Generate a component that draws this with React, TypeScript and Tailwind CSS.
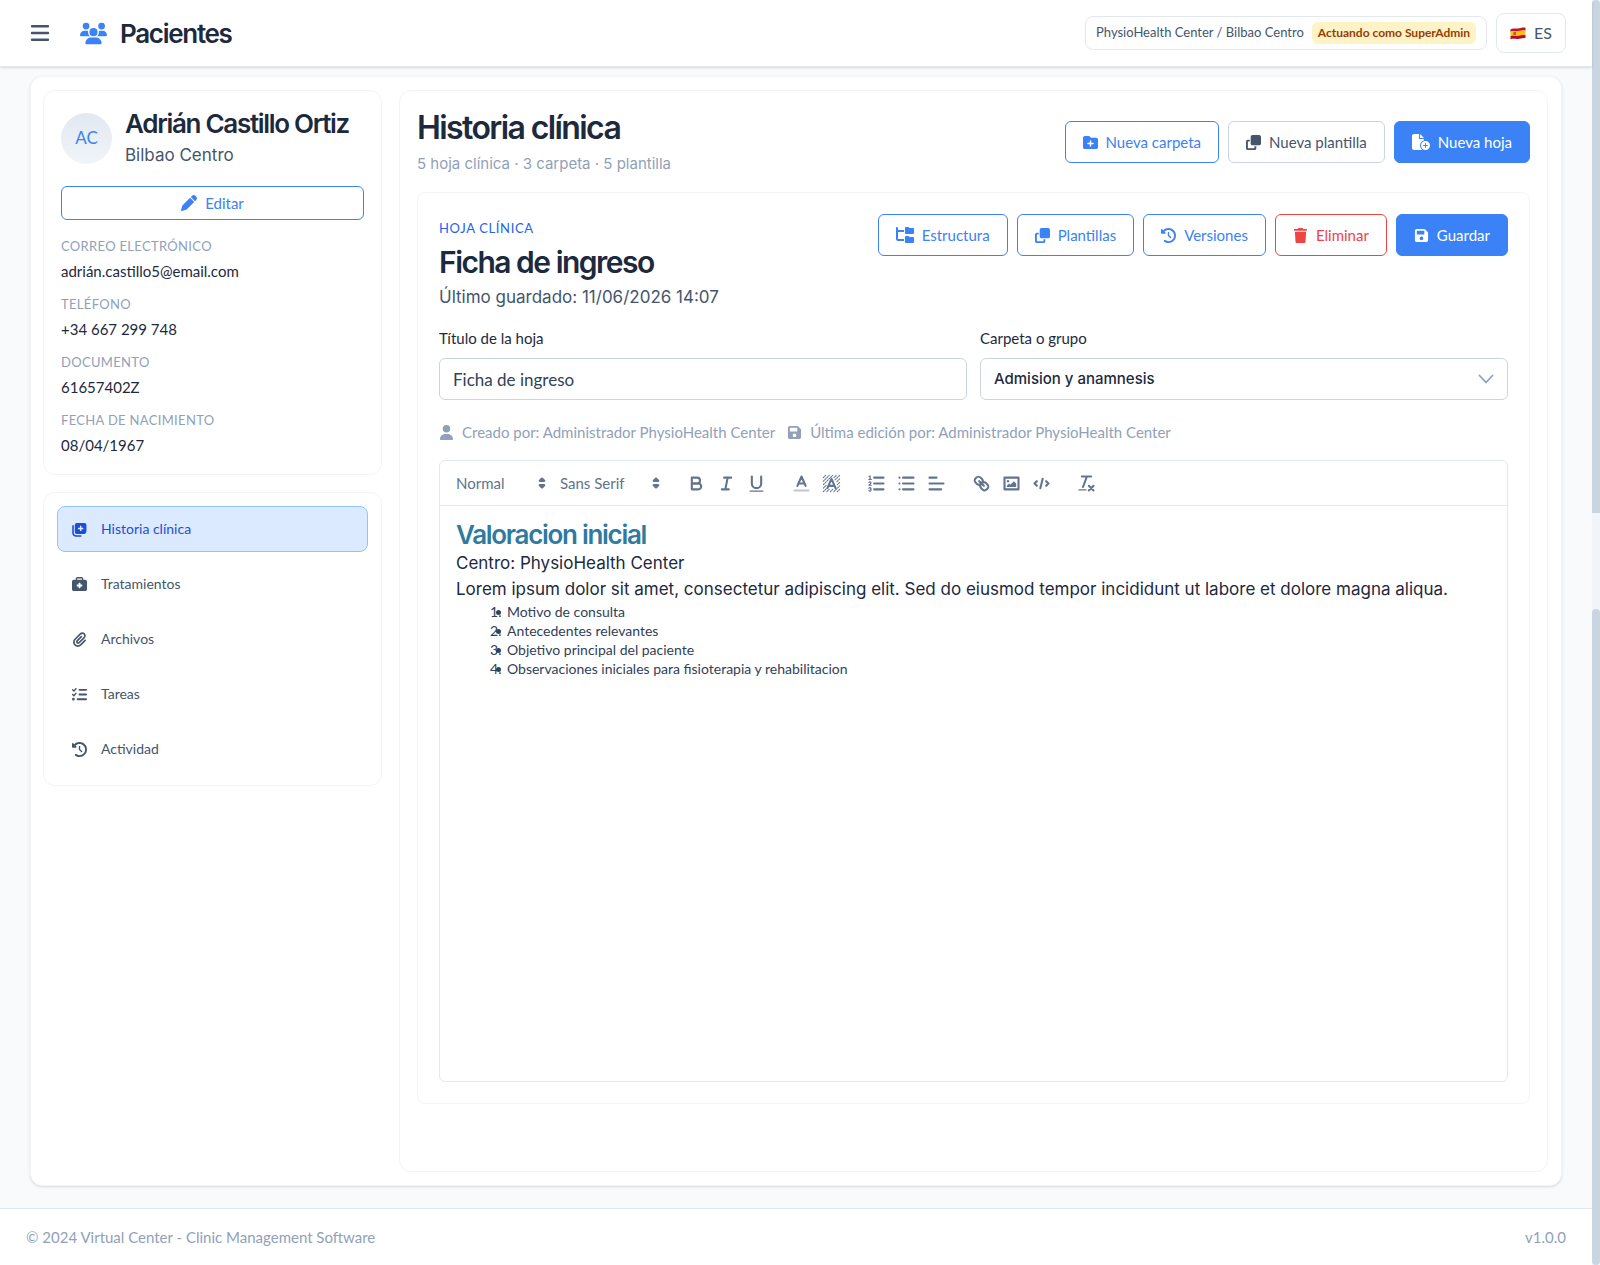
import { useState, type ReactNode } from 'react';
import {
  FaUsers,
  FaPen,
  FaBriefcaseMedical,
  FaPaperclip,
  FaListCheck,
  FaClockRotateLeft,
  FaFolderPlus,
  FaClone,
  FaFileCirclePlus,
  FaFolderTree,
  FaTrash,
  FaFloppyDisk,
  FaUser,
} from 'react-icons/fa6';
import clsx from 'clsx';

type Variant = 'outline' | 'neutral' | 'danger' | 'solid';

const variants: Record<Variant, string> = {
  outline: 'border-[#3b82f6] text-[#3b82f6] bg-white',
  neutral: 'border-slate-300 text-slate-600 bg-white',
  danger: 'border-[#ef4444] text-[#ef4444] bg-white',
  solid: 'border-[#3b82f6] bg-[#3b82f6] text-white',
};

const patientFields = [
  { label: 'Correo electrónico', value: 'adrián.castillo5@email.com' },
  { label: 'Teléfono', value: '+34 667 299 748' },
  { label: 'Documento', value: '61657402Z' },
  { label: 'Fecha de nacimiento', value: '08/04/1967' },
];

const sections = [
  { id: 'historia', label: 'Historia clínica', icon: <RecordsIcon /> },
  { id: 'tratamientos', label: 'Tratamientos', icon: <FaBriefcaseMedical className="text-[15px]" /> },
  { id: 'archivos', label: 'Archivos', icon: <FaPaperclip className="text-[15px]" /> },
  { id: 'tareas', label: 'Tareas', icon: <FaListCheck className="text-[15px]" /> },
  { id: 'actividad', label: 'Actividad', icon: <FaClockRotateLeft className="text-[15px]" /> },
];

const listItems = [
  'Motivo de consulta',
  'Antecedentes relevantes',
  'Objetivo principal del paciente',
  'Observaciones iniciales para fisioterapia y rehabilitacion',
];

function RecordsIcon() {
  return (
    <svg viewBox="0 0 16 16" className="size-[15px]" aria-hidden="true">
      <path
        d="M1.100 4v7.600a3.300 3.300 0 0 0 3.300 3.300h5"
        fill="none"
        stroke="currentColor"
        strokeWidth="1.700"
        strokeLinecap="round"
      />
      <path
        fillRule="evenodd"
        fill="currentColor"
        d="M5.200 1h8A2.200 2.200 0 0 1 15.400 3.200v6.300a3.300 3.300 0 0 1-3.300 3.300H5.200A2.200 2.200 0 0 1 3 10.600V3.200A2.200 2.200 0 0 1 5.200 1ZM8.500 4v2.100H6.400v1.500h2.100v2.100H10V7.600h2.100V6.100H10V4Z"
      />
    </svg>
  );
}

function SpainFlag() {
  return (
    <svg viewBox="0 0 16 13" className="w-4 h-[13px]" aria-hidden="true">
      <path d="M.5 2.200C3 .8 5.500 1.800 8 1.500S13 .1 15.500.8v3C13 3.100 10.500 4.300 8 4.500S3 4 .5 5Z" fill="#c8102e" />
      <path d="M.5 4.600C3 3.400 5.500 4.400 8 4.100S13 2.800 15.500 3.400v5C13 7.800 10.500 9 8 9.200S3 8.600.5 9.600Z" fill="#fbc116" />
      <path d="M.5 9.300C3 8.200 5.500 9.200 8 8.900S13 7.600 15.500 8.200v2.900c-2.500-.6-5 .6-7.500.9s-5-.700-7.500.4Z" fill="#b80d27" />
      <path d="M3.300 5.200h2.600v2.600H3.300Z" fill="#b5502b" />
    </svg>
  );
}

function Button({
  icon,
  variant = 'outline',
  children,
}: {
  icon: ReactNode;
  variant?: Variant;
  children: ReactNode;
}) {
  return (
    <button
      type="button"
      className={clsx(
        'flex items-center gap-2 h-[42px] px-[17px] rounded-md border text-[15px] whitespace-nowrap',
        variants[variant]
      )}
    >
      {icon}
      {children}
    </button>
  );
}

function Tool({ label, children }: { label: string; children: ReactNode }) {
  return (
    <button type="button" aria-label={label} className="flex items-center justify-center w-[30px] h-7">
      <svg
        viewBox="0 0 18 18"
        className="size-[21px]"
        fill="none"
        stroke="currentColor"
        strokeWidth="1.800"
        strokeLinecap="round"
        strokeLinejoin="round"
        aria-hidden="true"
      >
        {children}
      </svg>
    </button>
  );
}

function Picker({ label, value, className }: { label: string; value: string; className: string }) {
  return (
    <div className={clsx('relative flex items-center', className)}>
      <select
        aria-label={label}
        defaultValue={value}
        className="w-full appearance-none bg-transparent text-[15px] text-slate-500 outline-none"
      >
        <option>{value}</option>
      </select>
      <svg
        viewBox="0 0 18 18"
        className="absolute right-0 size-5 pointer-events-none text-slate-500"
        fill="currentColor"
        stroke="currentColor"
        strokeWidth="2"
        strokeLinejoin="round"
        aria-hidden="true"
      >
        <polygon points="7 11 9 13 11 11" />
        <polygon points="7 7 9 5 11 7" />
      </svg>
    </div>
  );
}

function Toolbar() {
  return (
    <div className="flex items-center h-[45px] pl-4 gap-[15px] border-b border-slate-200 text-slate-500">
      <div className="flex gap-2">
        <Picker label="Encabezado" value="Normal" className="w-24" />
        <Picker label="Fuente" value="Sans Serif" className="w-[106px]" />
      </div>
      <div className="flex">
        <Tool label="Negrita">
          <path d="M5,4H9.500A2.500,2.500,0,0,1,12,6.500v0A2.500,2.500,0,0,1,9.500,9H5V4Z" />
          <path d="M5,9h5.500A2.500,2.500,0,0,1,13,11.500v0A2.500,2.500,0,0,1,10.500,14H5V9Z" />
        </Tool>
        <Tool label="Cursiva">
          <path d="M7 4h6M5 14h6M8 14 10 4" />
        </Tool>
        <Tool label="Subrayado">
          <path d="M5,3V9a4.012,4.012,0,0,0,4,4H9a4.012,4.012,0,0,0,4-4V3" />
          <rect x="3" y="15" width="12" height="1" rx="0.500" fill="currentColor" stroke="none" />
        </Tool>
      </div>
      <div className="flex">
        <Tool label="Color de texto">
          <path d="M3 15h12" opacity="0.400" />
          <path d="M5.500 11 9 3l3.500 8M11.630 9H6.380" />
        </Tool>
        <Tool label="Color de fondo">
          <path
            strokeWidth="0.900"
            strokeDasharray="1.200 1"
            d="M2 4 4 2M2 7 7 2M2 10 10 2M2 13 5 10M13 2 11 4M2 16 5 13M16 2 12 6M5 16l2-2M16 5l-3 3M8 16l2-2M16 8l-2 2M11 16l5-5M14 16l2-2"
          />
          <path d="M5.500 13 9 5l3.500 8M11.630 11H6.380" />
        </Tool>
      </div>
      <div className="flex">
        <Tool label="Lista numerada">
          <path d="M7 4h8M7 9h8M7 14h8" />
          <path
            strokeWidth="1"
            d="M2.500 5.500h2M2.700 2.900 3.500 2.500v3M4.500,10.500h-2c0-.234,1.850-1.076,1.850-2.234A0.959,0.959,0,0,0,2.500,8.156M2.500,14.846a0.959,0.959,0,0,0,1.850-.109A0.700,0.700,0,0,0,3.750,14a0.688,0.688,0,0,0,.6-0.736,0.959,0.959,0,0,0-1.850-.109"
          />
        </Tool>
        <Tool label="Lista con viñetas">
          <path d="M6 4h9M6 9h9M6 14h9M3 4h0M3 9h0M3 14h0" />
        </Tool>
        <Tool label="Alineación">
          <path d="M3 9h12M3 14h10M3 4h6" />
        </Tool>
      </div>
      <div className="flex">
        <Tool label="Enlace">
          <path d="M7 7 11 11" />
          <path d="M8.900,4.577a3.476,3.476,0,0,1,.36,4.679A3.476,3.476,0,0,1,4.577,8.900C3.185,7.500,2.035,6.400,4.217,4.217S7.500,3.185,8.900,4.577Z" />
          <path d="M13.423,9.100a3.476,3.476,0,0,0-4.679-.36,3.476,3.476,0,0,0,.36,4.679c1.392,1.392,2.500,2.542,4.679.36S14.815,10.500,13.423,9.100Z" />
        </Tool>
        <Tool label="Imagen">
          <rect x="3" y="4" width="12" height="10" />
          <circle cx="6" cy="7" r="1" fill="currentColor" stroke="none" />
          <polygon points="5 12 5 11 7 9 8 10 11 7 13 9 13 12" fill="currentColor" stroke="none" />
        </Tool>
        <Tool label="Código">
          <path d="M5 7 3 9l2 2M13 7l2 2-2 2M10 5 8 13" />
        </Tool>
      </div>
      <Tool label="Borrar formato">
        <path d="M5 3h8M6 12 9.350 3M11 11l4 4M15 11l-4 4" />
        <rect x="2" y="14" width="7" height="1" rx="0.500" fill="currentColor" stroke="none" />
      </Tool>
    </div>
  );
}

function Header() {
  return (
    <header className="relative flex items-center justify-between h-[67px] pl-[30px] pr-[26px] bg-white border-b border-slate-200 shadow">
      <div className="flex items-center">
        <button type="button" aria-label="Menú" className="text-slate-600">
          <svg viewBox="0 0 20 20" className="size-5" stroke="currentColor" strokeWidth="2.400" strokeLinecap="round">
            <path d="M2 3.200h16M2 10h16M2 16.800h16" />
          </svg>
        </button>
        <FaUsers className="ml-[30px] text-[27px] text-[#3b82f6]" />
        <h1 className="ml-[13px] font-[Inter,sans-serif] text-[26px] font-semibold tracking-tighter">Pacientes</h1>
      </div>
      <div className="flex items-center gap-[9px]">
        <div className="flex items-center gap-2 h-[34px] px-[10px] rounded-lg border border-slate-200">
          <span className="text-[13px] text-slate-600">PhysioHealth Center / Bilbao Centro</span>
          <span className="px-[6px] py-px rounded-md bg-amber-100 text-xs leading-5 font-bold text-amber-800">
            Actuando como SuperAdmin
          </span>
        </div>
        <button
          type="button"
          className="flex items-center gap-2 h-10 px-[13px] rounded-lg border border-slate-200 text-base text-slate-600"
        >
          <SpainFlag />
          ES
        </button>
      </div>
    </header>
  );
}

function PatientCard() {
  return (
    <section className="h-[385px] px-[17px] pt-4 rounded-xl border border-slate-100">
      <div className="flex items-center gap-[13px]">
        <div className="flex items-center justify-center size-[51px] shrink-0 rounded-full bg-linear-to-b from-slate-200 to-slate-100 text-[17px] text-[#3b82f6]">
          AC
        </div>
        <div className="font-[Inter,sans-serif]">
          <h2 className="text-[26px] leading-[34px] font-semibold tracking-tighter whitespace-nowrap">
            Adrián Castillo Ortiz
          </h2>
          <p className="text-[17px] leading-7 text-slate-600">Bilbao Centro</p>
        </div>
      </div>
      <button
        type="button"
        className="flex items-center justify-center gap-2 w-full h-[34px] mt-[17px] rounded-md border border-[#3b82f6] text-[15px] text-[#3b82f6]"
      >
        <FaPen className="text-base" />
        Editar
      </button>
      <dl className="mt-4">
        {patientFields.map((f) => (
          <div key={f.label} className="h-[58px]">
            <dt className="text-[13px] leading-5 tracking-wide uppercase text-slate-400">{f.label}</dt>
            <dd className="mt-[3px] text-[15px] leading-6 text-slate-800">{f.value}</dd>
          </div>
        ))}
      </dl>
    </section>
  );
}

function SectionNav() {
  const [active, setActive] = useState('historia');

  return (
    <nav className="flex flex-col gap-[9px] p-[13px] rounded-xl border border-slate-100">
      {sections.map((s) => (
        <button
          key={s.id}
          type="button"
          onClick={() => setActive(s.id)}
          className={clsx(
            'flex items-center gap-[14px] h-[46px] px-[14px] rounded-lg border text-sm',
            s.id === active ? 'border-blue-300 bg-blue-100 text-[#1d4ed8]' : 'border-transparent text-slate-600'
          )}
        >
          {s.icon}
          {s.label}
        </button>
      ))}
    </nav>
  );
}

function SheetEditor() {
  const [title, setTitle] = useState('Ficha de ingreso');

  return (
    <section className="mt-4 p-[21px] rounded-lg border border-slate-100">
      <div className="flex items-start justify-between">
        <div>
          <p className="text-[13px] leading-7 tracking-wider uppercase text-[#2563eb]">Hoja clínica</p>
          <h3 className="font-[Inter,sans-serif] text-[30px] leading-10 font-semibold tracking-tighter">
            Ficha de ingreso
          </h3>
          <p className="font-[Inter,sans-serif] text-[17px] leading-[30px] text-slate-600">
            Último guardado: 11/06/2026 14:07
          </p>
        </div>
        <div className="flex gap-[9px]">
          <Button icon={<FaFolderTree className="text-lg" />}>Estructura</Button>
          <Button icon={<FaClone />}>Plantillas</Button>
          <Button icon={<FaClockRotateLeft />}>Versiones</Button>
          <Button icon={<FaTrash />} variant="danger">
            Eliminar
          </Button>
          <Button icon={<FaFloppyDisk />} variant="solid">
            Guardar
          </Button>
        </div>
      </div>

      <div className="grid grid-cols-2 gap-[13px] mt-[14px]">
        <div>
          <label htmlFor="titulo" className="block text-[15px] leading-6 text-slate-800">
            Título de la hoja
          </label>
          <input
            id="titulo"
            value={title}
            onChange={(e) => setTitle(e.target.value)}
            className="w-full h-[42px] mt-2 px-[13px] rounded-md border border-slate-300 text-[17px] text-slate-700"
          />
        </div>
        <div>
          <label htmlFor="carpeta" className="block text-[15px] leading-6 text-slate-800">
            Carpeta o grupo
          </label>
          <div className="relative mt-2">
            <select
              id="carpeta"
              className="w-full h-[42px] px-[13px] appearance-none rounded-md border border-slate-300 bg-white font-[Inter,sans-serif] text-[15px] font-medium text-slate-800"
            >
              <option>Admision y anamnesis</option>
            </select>
            <svg
              viewBox="0 0 16 10"
              className="absolute right-[14px] top-4 w-4 h-[10px] pointer-events-none text-slate-400"
              fill="none"
              stroke="currentColor"
              strokeWidth="1.800"
              strokeLinecap="round"
              strokeLinejoin="round"
              aria-hidden="true"
            >
              <path d="m1.500 1.500 6.500 7 6.500-7" />
            </svg>
          </div>
        </div>
      </div>

      <div className="flex items-center gap-3 mt-5 text-[15px] leading-6 text-slate-400">
        <span className="flex items-center gap-2">
          <FaUser />
          Creado por: Administrador PhysioHealth Center
        </span>
        <span className="flex items-center gap-2">
          <FaFloppyDisk />
          Última edición por: Administrador PhysioHealth Center
        </span>
      </div>

      <div className="mt-4 rounded-md border border-slate-200">
        <Toolbar />
        <div className="min-h-[575px] px-4 pt-[14px]">
          <h4 className="font-[Inter,sans-serif] text-[26px] leading-[30px] font-semibold tracking-tighter text-[#2f7a9f]">
            Valoracion inicial
          </h4>
          <div className="font-[Inter,sans-serif] text-[17px] leading-[26px] text-slate-800">
            <p>Centro: PhysioHealth Center</p>
            <p>
              Lorem ipsum dolor sit amet, consectetur adipiscing elit. Sed do eiusmod tempor incididunt ut labore et
              dolore magna aliqua.
            </p>
          </div>
          <ol className="pl-[34px] text-sm text-slate-700">
            {listItems.map((item, i) => (
              <li key={item} className="relative flex leading-[19px]">
                <span className="w-[17px]">{i + 1}.</span>
                <span className="absolute left-[6px] top-2 size-[5px] rounded-full bg-slate-700" />
                {item}
              </li>
            ))}
          </ol>
        </div>
      </div>
    </section>
  );
}

export default function App() {
  return (
    <div className="flex min-h-screen bg-slate-50 font-[Lato,sans-serif] text-slate-800">
      <div className="flex flex-col flex-1 min-w-0">
        <Header />
        <main className="flex flex-1 gap-[17px] mx-[30px] mt-[9px] mb-[22px] py-[13px] pl-3 pr-[13px] rounded-xl border border-slate-100 bg-white shadow">
          <aside className="flex flex-col gap-[17px] w-[339px] shrink-0">
            <PatientCard />
            <SectionNav />
          </aside>
          <div className="flex-1 min-w-0 px-[17px] pt-[17px] pb-16 rounded-xl border border-slate-100">
            <div className="flex items-center justify-between">
              <div className="font-[Inter,sans-serif]">
                <h2 className="text-[32px] leading-10 font-semibold tracking-tighter">Historia clínica</h2>
                <p className="mt-1 text-[15px] leading-6 text-slate-400">5 hoja clínica · 3 carpeta · 5 plantilla</p>
              </div>
              <div className="flex gap-[9px]">
                <Button icon={<FaFolderPlus />}>Nueva carpeta</Button>
                <Button icon={<FaClone />} variant="neutral">
                  Nueva plantilla
                </Button>
                <Button icon={<FaFileCirclePlus className="text-lg" />} variant="solid">
                  Nueva hoja
                </Button>
              </div>
            </div>
            <SheetEditor />
          </div>
        </main>
        <footer className="flex items-center justify-between h-[57px] px-[26px] border-t border-slate-200 bg-white text-[15px] text-slate-400">
          <span>© 2024 Virtual Center - Clinic Management Software</span>
          <span>v1.0.0</span>
        </footer>
      </div>
      <div className="flex flex-col w-2 shrink-0 gap-24 bg-slate-100" aria-hidden="true">
        <div className="h-[513px] rounded-t-full bg-slate-300" />
        <div className="flex-1 rounded-full bg-slate-300" />
      </div>
    </div>
  );
}
